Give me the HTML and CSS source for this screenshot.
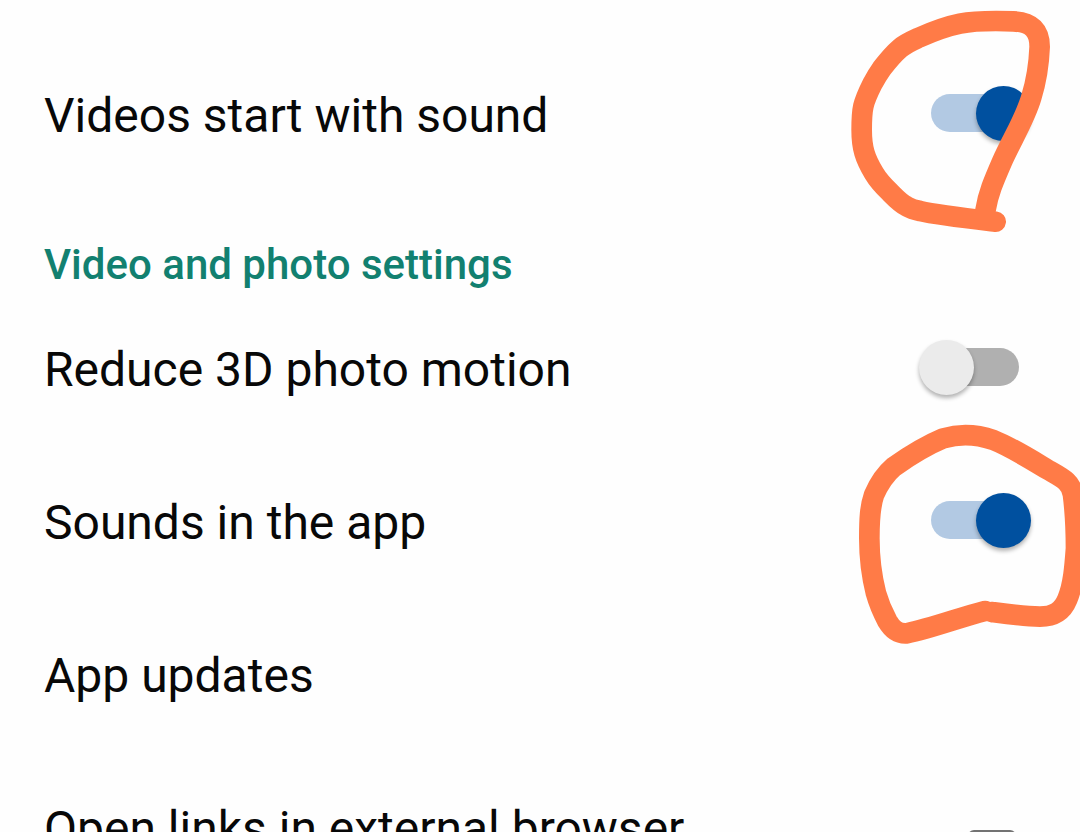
FILE: index.html
```html
<!DOCTYPE html>
<html lang="en">
<head>
  <meta charset="UTF-8" />
  <title>Settings</title>
  <meta name="viewport" content="width=device-width, initial-scale=1.0" />
  <link rel="stylesheet" href="styles.css">
</head>
<body>

  <main class="settings">
    <div class="setting">
      <label class="setting-label" for="videoSound">Videos start with sound</label>
      <input class="switch" type="checkbox" role="switch" id="videoSound" checked />
      <svg class="marker" viewBox="0 0 720 720" aria-hidden="true">
        <path d="M467 665 C380 655 290 645 240 633 C225 630 212 626 200 619 C180 609 165 592 150 577 C132 560 115 542 102 520 C75 475 65 445 65 390 C65 325 68 310 97 252 C106 235 115 220 125 206 C142 184 160 162 180 145 C198 130 215 123 237 113 C275 96 320 79 360 71 C410 61 465 62 520 64 C575 66 599 92 599 140 C597 190 590 240 574 292 C556 355 515 420 486 485 C460 545 445 580 437 628 L432 655" />
      </svg>
    </div>

    <h2 class="settings-heading">Video and photo settings</h2>

    <div class="setting">
      <label class="setting-label" for="photoMotion">Reduce 3D photo motion</label>
      <input class="switch" type="checkbox" role="switch" id="photoMotion" />
    </div>

    <div class="setting">
      <label class="setting-label" for="appSounds">Sounds in the app</label>
      <input class="switch" type="checkbox" role="switch" id="appSounds" checked />
      <svg class="marker marker-low" viewBox="0 0 720 720" aria-hidden="true">
        <path d="M435 588 C360 607 275 640 200 655 C170 657 155 640 142 618 C128 592 115 560 108 535 C94 480 88 430 88 370 C88 310 90 275 102 240 C115 210 135 178 162 155 C205 125 255 93 310 70 C355 57 410 58 460 75 C515 97 570 132 625 165 C665 188 694 200 699 240 C704 280 708 340 708 400 C704 455 700 510 682 553 C667 590 640 605 600 605 C550 604 500 597 455 591" />
      </svg>
    </div>

    <div class="setting">
      <a class="setting-label" href="#updates">App updates</a>
    </div>

    <div class="setting setting-tall">
      <label class="setting-label" for="externalBrowser">Open links in external browser</label>
      <input class="checkbox" type="checkbox" id="externalBrowser" />
    </div>
  </main>

</body>
</html>
```
FILE: styles.css
```css
* {
  box-sizing: border-box;
}

body {
  margin: 0;
  background: #fefefe;
  color: #080808;
  font-family: Roboto, sans-serif;
}

.settings {
  height: 100vh;
  padding-top: 37px;
  overflow: hidden;
}

.setting {
  position: relative;
  display: flex;
  align-items: center;
  justify-content: space-between;
  min-height: 153px;
  padding: 0 49px 0 44px;
}

.setting-label {
  padding-top: 4px;
  color: inherit;
  font-size: 48px;
  line-height: 56px;
  text-decoration: none;
}

.settings-heading {
  margin: 0;
  padding: 51px 44px 2px;
  color: #128070;
  font-size: 42px;
  font-weight: 500;
  line-height: 48px;
}

/* switches */
.switch {
  position: relative;
  flex: none;
  width: 112px;
  height: 55px;
  margin: 0;
  appearance: none;
  cursor: pointer;
}

.switch::before {
  content: "";
  position: absolute;
  inset: 8px 12px 9px;
  border-radius: 19px;
  background: #b0b0b0;
}

.switch::after {
  content: "";
  position: absolute;
  top: 0;
  left: 0;
  width: 55px;
  height: 55px;
  border-radius: 50%;
  background: #ebebeb;
  box-shadow: 0 3px 4px rgba(0, 0, 0, 0.3);
}

.switch:checked::before {
  background: #b2c9e3;
}

.switch:checked::after {
  left: 57px;
  background: #00509f;
}

/* row with a check box */
.setting-tall {
  min-height: 207px;
  padding-right: 64px;
}

.setting-tall .setting-label {
  align-self: flex-start;
  padding-top: 51px;
}

.checkbox {
  flex: none;
  width: 48px;
  height: 48px;
  margin: 0;
  border: 5px solid #737373;
  border-radius: 6px;
  appearance: none;
}

/* hand-drawn rings */
.marker {
  position: absolute;
  top: -37px;
  right: 0;
  z-index: 1;
  width: 240px;
  height: 240px;
  fill: none;
  stroke: #ff7b47;
  stroke-width: 62;
  stroke-linecap: round;
  stroke-linejoin: round;
  pointer-events: none;
}

.marker-low {
  top: -29px;
}
```
